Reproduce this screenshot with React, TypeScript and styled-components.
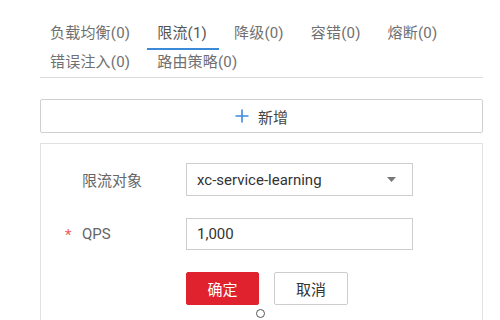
import styled, { createGlobalStyle } from 'styled-components'

// 流量治理 - 限流规则编辑
const GlobalStyle = createGlobalStyle`
  html, body {
    margin: 0;
    padding: 0;
    background: #fff;
  }
  body {
    font-family: Roboto, "Noto Sans CJK SC", "Noto Sans", sans-serif;
    color: #333;
  }
  * {
    box-sizing: border-box;
  }
`

const tabs = [
  { key: 'lb', label: '负载均衡(0)' },
  { key: 'limit', label: '限流(1)' },
  { key: 'degrade', label: '降级(0)' },
  { key: 'fault', label: '容错(0)' },
  { key: 'fuse', label: '熔断(0)' },
  { key: 'inject', label: '错误注入(0)' },
  { key: 'route', label: '路由策略(0)' },
]

export default function App() {
  return (
    <Page>
      <GlobalStyle />
      <TabBar>
        {tabs.map((t) => (
          <Tab key={t.key} active={t.key === 'limit'}>
            {t.label}
          </Tab>
        ))}
      </TabBar>
      <AddButton>
        <PlusIcon />
        新增
      </AddButton>
      <Card>
        <FormRow>
          <Label>限流对象</Label>
          <Select>
            <span>xc-service-learning</span>
            <Caret />
          </Select>
        </FormRow>
        <FormRow>
          <Label required={true}>QPS</Label>
          <Input defaultValue={'1,000'} />
        </FormRow>
        <Actions>
          <Button primary={true}>确定</Button>
          <Button>取消</Button>
          <CursorRing />
        </Actions>
      </Card>
    </Page>
  )
}

const PlusIcon = () => (
  <svg width="14" height="14" viewBox="0 0 14 14">
    <path d="M7 0.5V13.5M0.5 7H13.5" stroke="#3b8be0" strokeWidth="1.6" />
  </svg>
)

const Caret = () => (
  <svg width="9" height="5" viewBox="0 0 9 5">
    <path d="M0 0H9L4.5 5Z" fill="#777" />
  </svg>
)

const Page = styled.div`
  width: 500px;
  height: 320px;
  overflow: hidden;
  padding: 19px 17px 0 40px;
`

const TabBar = styled.div`
  display: flex;
  flex-wrap: wrap;
  column-gap: 7px;
  border-bottom: 1px solid #dcdcdc;
`

const Tab = styled.div<{ active?: boolean }>`
  position: relative;
  height: 29px;
  line-height: 29px;
  padding: 0 10px 0 10px;
  font-size: 15px;
  letter-spacing: 0.2px;
  color: ${(p) => (p.active ? '#555' : '#707070')};
  white-space: nowrap;
  &::after {
    content: '';
    display: ${(p) => (p.active ? 'block' : 'none')};
    position: absolute;
    left: 0;
    right: -2px;
    bottom: -2px;
    height: 2px;
    background: #3a8ad8;
  }
`

const AddButton = styled.div`
  margin-top: 21px;
  height: 34px;
  border: 1px solid #cfcfcf;
  border-radius: 2px;
  display: flex;
  align-items: center;
  justify-content: center;
  gap: 9px;
  font-size: 15px;
  color: #444;
`

const Card = styled.div`
  margin-top: 10px;
  height: 200px;
  border: 1px solid #e2e2e2;
  border-bottom: none;
  padding: 19px 0 0 41px;
`

const FormRow = styled.div`
  display: flex;
  align-items: center;
  margin-bottom: 22px;
`

const Label = styled.div<{ required?: boolean }>`
  position: relative;
  width: 104px;
  font-size: 15px;
  color: #666;
  &::before {
    content: '*';
    display: ${(p) => (p.required ? 'block' : 'none')};
    position: absolute;
    left: -17px;
    top: 1px;
    color: #ee5b5b;
    font-size: 15px;
  }
`

const Select = styled.div`
  width: 227px;
  height: 33px;
  border: 1px solid #cdcdcd;
  display: flex;
  align-items: center;
  justify-content: space-between;
  padding: 0 16px 0 10px;
  font-size: 15px;
  color: #333;
`

const Input = styled.input`
  width: 227px;
  height: 32px;
  border: 1px solid #cdcdcd;
  border-radius: 0;
  padding: 0 10px;
  font-family: inherit;
  font-size: 15px;
  color: #333;
  outline: none;
`

const Actions = styled.div`
  position: relative;
  display: flex;
  gap: 15px;
  margin-left: 104px;
`

const Button = styled.div<{ primary?: boolean }>`
  width: ${(p) => (p.primary ? '73px' : '74px')};
  height: 33px;
  display: flex;
  align-items: center;
  justify-content: center;
  font-size: 15px;
  border-radius: 2px;
  background: ${(p) => (p.primary ? '#e0222e' : '#fff')};
  color: ${(p) => (p.primary ? '#fff' : '#333')};
  border: 1px solid ${(p) => (p.primary ? '#e0222e' : '#cdcdcd')};
`

const CursorRing = styled.div`
  position: absolute;
  left: 70px;
  top: 37px;
  width: 9px;
  height: 9px;
  border: 1px solid #555;
  border-radius: 50%;
`
